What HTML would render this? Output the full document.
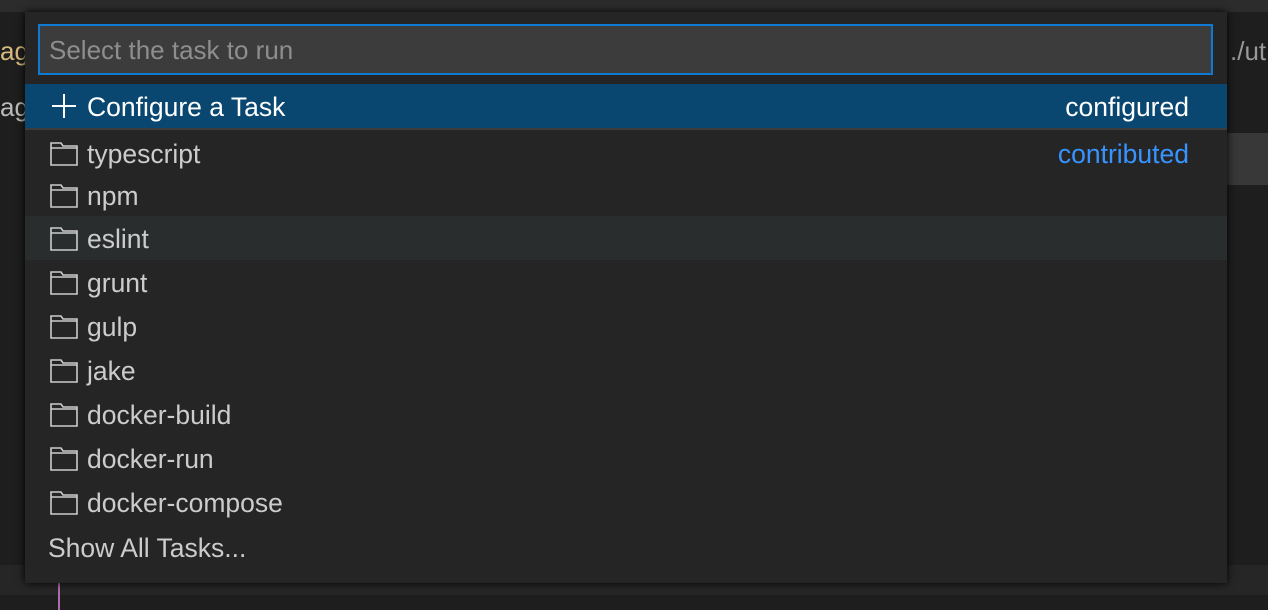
<!DOCTYPE html>
<html><head><meta charset="utf-8"><style>
body{margin:0;width:1268px;height:610px;background:#1e1e1e;overflow:hidden;position:relative;font-family:"Liberation Sans",sans-serif}
.top{position:absolute;left:0;top:0;width:1268px;height:12px;background:#2c2c2c}
.bgl{position:absolute;color:#d7ba7d;font-size:26px}
.w{position:absolute;left:25px;top:12px;width:1202px;height:571px;background:#252526;box-shadow:0 0 8px #000}
.inp{position:absolute;left:13px;top:12px;width:1162px;height:47px;background:#3c3c3c;border:2px solid #0e7ad3;color:#8e8e8e;font-size:26px;line-height:49px;padding-left:9px}
.row{position:absolute;left:0;width:1202px;height:44px;color:#cccccc;font-size:26.5px;line-height:46px}
.row .t{position:absolute;left:62px}
.row svg{position:absolute;left:25px;top:11px}
.r{position:absolute;right:38px}
</style></head><body>
<div class="top"></div>
<div class="bgl" style="left:0;top:36px">ag</div>
<div class="bgl" style="left:0;top:92px;color:#bbb">ag</div>
<div style="position:absolute;left:1230px;top:36px;color:#999;font-size:26px">./ut</div>
<div style="position:absolute;left:1227px;top:133px;width:41px;height:52px;background:#383838"></div>
<div style="position:absolute;left:0;top:565px;width:1268px;height:30px;background:#262626"></div>
<div style="position:absolute;left:58px;top:565px;width:2px;height:45px;background:#b06ab0"></div>
<div class="w">
<div class="inp">Select the task to run</div>
<div class="row" style="top:72px;background:#094771;color:#fff"><svg width="28" height="28" viewBox="0 0 28 28" style="left:25px;top:8px"><path d="M14 2V26M2 14H26" stroke="#fff" stroke-width="2"/></svg><span class="t">Configure a Task</span><span class="r">configured</span></div>
<div style="position:absolute;left:0;top:116px;width:1202px;height:2px;background:#3c3c3c"></div>
<div class="row" style="top:119px"><svg width="28" height="24" viewBox="0 0 28 24"><path d="M1 1H11L13 4H27V23H1ZM1 6H27" fill="none" stroke="#ccc" stroke-width="1.6"/></svg><span class="t">typescript</span><span class="r" style="color:#3794ff">contributed</span></div>
<div class="row" style="top:161px"><svg width="28" height="24" viewBox="0 0 28 24"><path d="M1 1H11L13 4H27V23H1ZM1 6H27" fill="none" stroke="#ccc" stroke-width="1.6"/></svg><span class="t">npm</span></div>
<div class="row" style="top:204px;background:#2a2d2e"><svg width="28" height="24" viewBox="0 0 28 24"><path d="M1 1H11L13 4H27V23H1ZM1 6H27" fill="none" stroke="#ccc" stroke-width="1.6"/></svg><span class="t">eslint</span></div>
<div class="row" style="top:248px"><svg width="28" height="24" viewBox="0 0 28 24"><path d="M1 1H11L13 4H27V23H1ZM1 6H27" fill="none" stroke="#ccc" stroke-width="1.6"/></svg><span class="t">grunt</span></div>
<div class="row" style="top:292px"><svg width="28" height="24" viewBox="0 0 28 24"><path d="M1 1H11L13 4H27V23H1ZM1 6H27" fill="none" stroke="#ccc" stroke-width="1.6"/></svg><span class="t">gulp</span></div>
<div class="row" style="top:336px"><svg width="28" height="24" viewBox="0 0 28 24"><path d="M1 1H11L13 4H27V23H1ZM1 6H27" fill="none" stroke="#ccc" stroke-width="1.6"/></svg><span class="t">jake</span></div>
<div class="row" style="top:380px"><svg width="28" height="24" viewBox="0 0 28 24"><path d="M1 1H11L13 4H27V23H1ZM1 6H27" fill="none" stroke="#ccc" stroke-width="1.6"/></svg><span class="t">docker-build</span></div>
<div class="row" style="top:424px"><svg width="28" height="24" viewBox="0 0 28 24"><path d="M1 1H11L13 4H27V23H1ZM1 6H27" fill="none" stroke="#ccc" stroke-width="1.6"/></svg><span class="t">docker-run</span></div>
<div class="row" style="top:468px"><svg width="28" height="24" viewBox="0 0 28 24"><path d="M1 1H11L13 4H27V23H1ZM1 6H27" fill="none" stroke="#ccc" stroke-width="1.6"/></svg><span class="t">docker-compose</span></div>
<div class="row" style="top:513px"><span class="t" style="left:23px">Show All Tasks...</span></div>
</div>
</body></html>
